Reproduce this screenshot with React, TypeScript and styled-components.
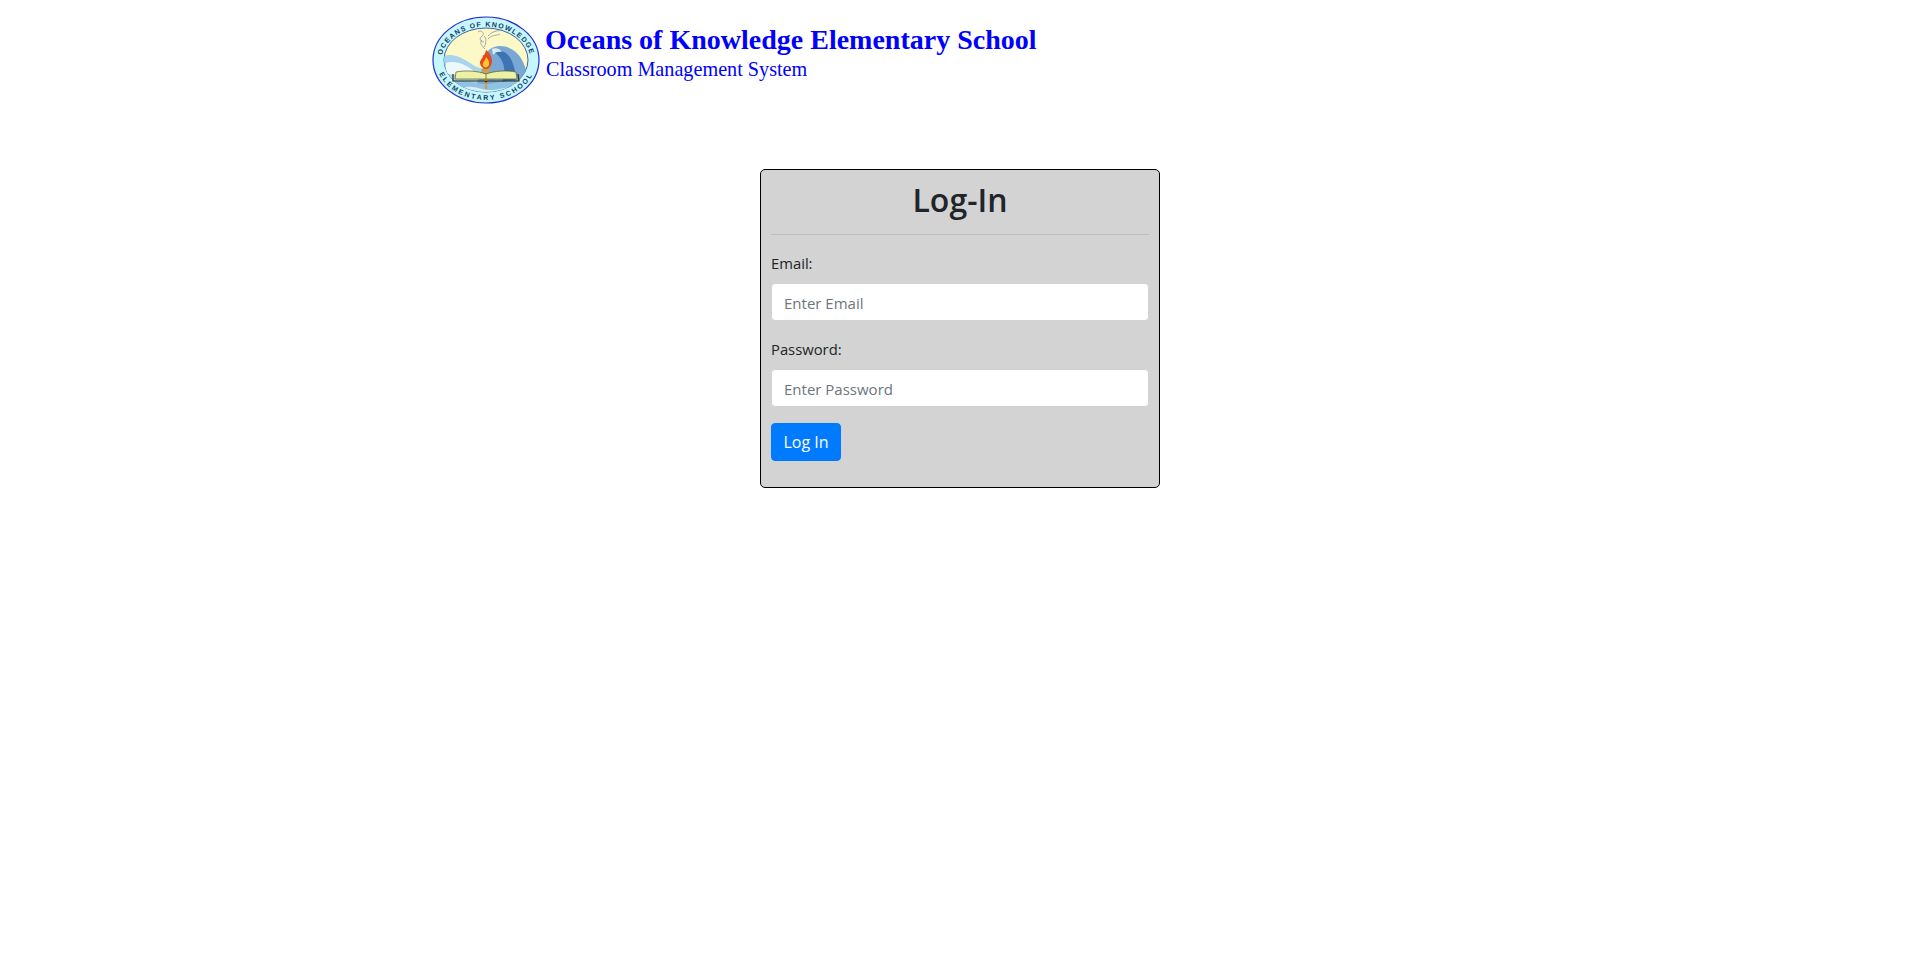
import React from 'react';
import styled, { createGlobalStyle } from 'styled-components';

const GlobalStyle = createGlobalStyle`
  * {
    box-sizing: border-box;
  }

  body {
    margin: 0;
    background: #fff;
    color: #212529;
    font-family: "Open Sans", "Noto Sans", Arial, sans-serif;
    font-size: 15px;
    line-height: 24px;
  }
`;

const SchoolLogo = () => (
  <svg width="108" height="88" viewBox="0 0 108 88">
    <defs>
      <path id="arcTop" d="M9 46 A45 35.500 0 0 1 99 46" />
      <path id="arcBottom" d="M4 44 A50 40 0 0 0 104 44" />
      <clipPath id="innerClip">
        <ellipse cx="54" cy="44" rx="42" ry="32" />
      </clipPath>
    </defs>
    <ellipse cx="54" cy="44" rx="53" ry="43" fill="#c6f6ff" stroke="#1c2fd0" strokeWidth="1.200" />
    <ellipse cx="54" cy="44" rx="42" ry="32" fill="#fdf8c8" stroke="#1c3f8a" strokeWidth="0.800" />
    <g clipPath="url(#innerClip)">
      <path d="M12 40 C22 37 30 42 38 47 C42 50 46 52 52 53 L52 80 L10 80 Z" fill="#a8d4ec" />
      <path d="M14 47 C24 44 34 49 42 55 L40 60 L14 58 Z" fill="#eef8fb" />
      <path d="M50 54 C56 44 52 35 60 32 C70 27 84 32 90 44 C95 54 97 62 96 80 L40 80 Z" fill="#7aa8d4" />
      <path d="M62 36 C70 32 78 38 81 48 C84 56 84 62 83 66 L70 66 C75 56 72 42 62 36 Z" fill="#3f74b2" />
      <path d="M60 33 C64 31 68 33 70 36 C66 35 63 36 61 39 Z" fill="#dcecf6" />
      <path d="M20 66 C34 62 42 68 54 68 C66 68 76 62 92 66 L92 80 L20 80 Z" fill="#8fc3e4" />
      <path d="M30 72 C42 68 48 74 58 74 C68 74 74 70 82 72 L82 78 L30 78 Z" fill="#d8eef8" />
    </g>
    <path
      d="M46 16 C50 13 53 18 50 20 C47 22 48 26 52 26 M52 20 C55 22 54 28 52 31 M50 24 C47 27 50 30 53 33 M56 20 C60 15 66 15 69 14 M56 23 C61 18 65 20 68 18"
      fill="none"
      stroke="#9fa9ad"
      strokeWidth="1"
    />
    <path d="M52.500 63 L55.500 63 L55 73 L53 73 Z" fill="#d89b3c" />
    <path d="M54 34 C59 38 61 43 59.500 48 C58.500 51 56 53 54 53 C51 53 48.500 50.500 48 47 C48 43 51 43 51 39 C52 40 53 38 54 34 Z" fill="#e4481c" />
    <path d="M54 41 C57 44 58 47 56.500 50 C55 52 52 52 50.800 49.500 C50 47 53 45 54 41 Z" fill="#fbc52e" />
    <path d="M49 53 L59 53 L57 57 L51 57 Z" fill="#c9a24a" />
    <path d="M24 56 C34 54 46 55 54 58 C62 55 74 54 84 56 L85 63 L23 63 Z" fill="#eef0a4" stroke="#5a5a20" strokeWidth="0.700" />
    <path d="M54 58 L54 63" stroke="#5a5a20" strokeWidth="0.700" />
    <path d="M21 58 L21 65 L53 65 L54 66 L55 65 L87 65 L86 58" fill="none" stroke="#2a2a18" strokeWidth="1.200" />
    <LogoText $spacing={1.2}>
      <textPath href="#arcTop" startOffset="50%" textAnchor="middle">
        OCEANS OF KNOWLEDGE
      </textPath>
    </LogoText>
    <LogoText $spacing={2}>
      <textPath href="#arcBottom" startOffset="50%" textAnchor="middle">
        ELEMENTARY SCHOOL
      </textPath>
    </LogoText>
  </svg>
);

const App: React.FC = () => {
  return (
    <>
      <GlobalStyle />
      <Header>
        <SchoolLogo />
        <HeaderText>
          <SchoolName>Oceans of Knowledge Elementary School</SchoolName>
          <SystemName>Classroom Management System</SystemName>
        </HeaderText>
      </Header>

      <Main>
        <LoginCard>
          <CardTitle>Log-In</CardTitle>
          <Divider />
          <form>
            <FormGroup>
              <Label htmlFor="email">Email:</Label>
              <Input id="email" type="email" placeholder="Enter Email" />
            </FormGroup>
            <FormGroup>
              <Label htmlFor="password">Password:</Label>
              <Input id="password" type="password" placeholder="Enter Password" />
            </FormGroup>
            <SubmitButton type="button">Log In</SubmitButton>
          </form>
        </LoginCard>
      </Main>
    </>
  );
};

const LogoText = styled.text<{ $spacing: number }>`
  font-family: "Liberation Sans", Arial, sans-serif;
  font-size: 7px;
  font-weight: 700;
  letter-spacing: ${props => props.$spacing}px;
  fill: #0f3d5c;
`;

const Header = styled.header`
  display: flex;
  align-items: flex-start;
  gap: 5px;
  height: 169px;
  padding: 16px 0 0 432px;
`;

const HeaderText = styled.div`
  display: flex;
  flex-direction: column;
  padding-top: 7px;
  color: #0000ff;
  font-family: "Liberation Serif", "Times New Roman", serif;
`;

const SchoolName = styled.div`
  font-size: 28px;
  font-weight: 700;
  line-height: 33px;
`;

const SystemName = styled.div`
  margin-left: 1px;
  font-size: 20.200px;
  line-height: 26px;
`;

const Main = styled.main`
  display: flex;
  justify-content: center;
`;

const LoginCard = styled.section`
  width: 400px;
  height: 319px;
  padding: 10px;
  background: #d3d3d3;
  border: 1px solid #000;
  border-radius: 5px;
`;

const CardTitle = styled.h2`
  margin: 1px 0 15px;
  font-size: 32px;
  font-weight: 600;
  line-height: 38.400px;
  text-align: center;
`;

const Divider = styled.hr`
  margin: 0 0 16px;
  border: 0;
  border-top: 1px solid rgba(0, 0, 0, 0.1);
`;

const FormGroup = styled.div`
  margin-bottom: 16px;
`;

const Label = styled.label`
  display: block;
  margin-bottom: 8px;
  font-size: 14.800px;
`;

const Input = styled.input`
  display: block;
  width: 100%;
  height: 38px;
  padding: 7px 12px 5px;
  background: #fff;
  border: 1px solid #ced4da;
  border-radius: 4px;
  color: #495057;
  font-family: inherit;
  font-size: 15px;
  line-height: 24px;

  &::placeholder {
    color: #6c757d;
    opacity: 1;
  }
`;

const SubmitButton = styled.button`
  display: block;
  height: 38px;
  width: 70px;
  padding: 6px 0;
  background: #007bff;
  border: 1px solid #007bff;
  border-radius: 4px;
  color: #fff;
  font-family: inherit;
  font-size: 16px;
  line-height: 24px;
  cursor: pointer;
`;

export default App;
